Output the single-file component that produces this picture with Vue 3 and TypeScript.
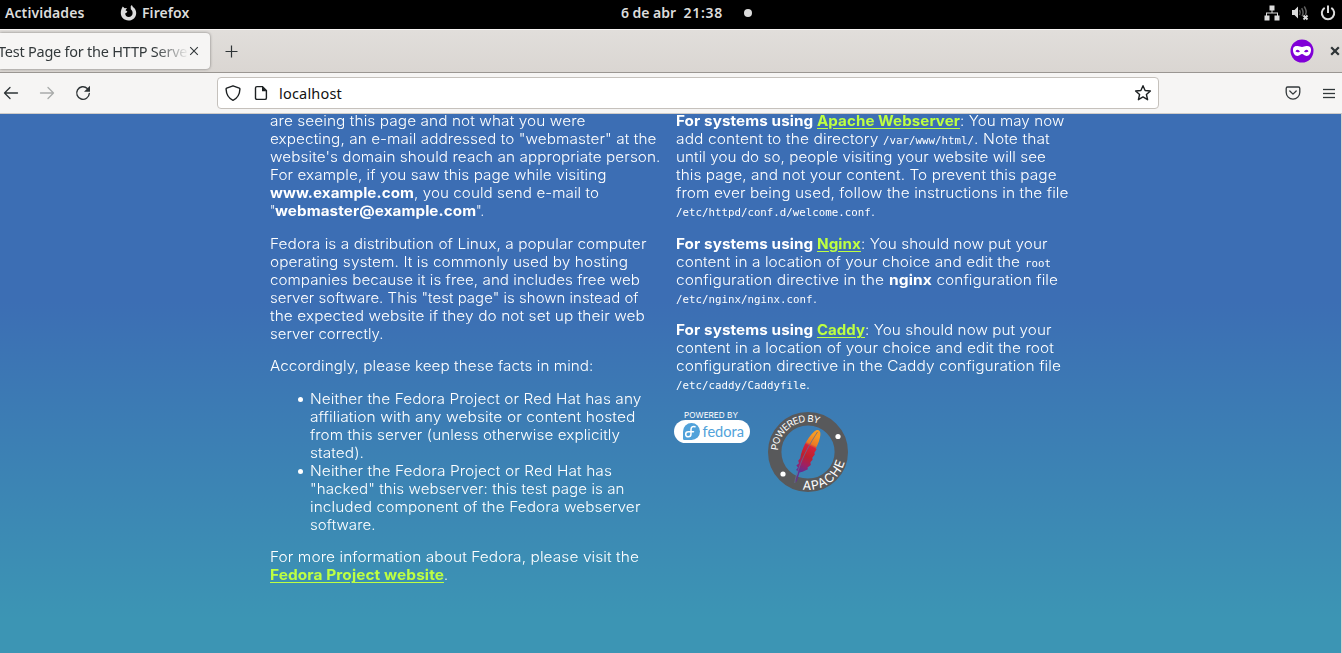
<script setup lang="ts">
type Kind = 'text' | 'bold' | 'link' | 'code'
interface Segment { t: string; w: number; k: Kind }
type Line = Segment[]

const s = (t: string, w: number, k: Kind = 'text'): Segment => ({ t, w, k })

// Makes a run of text fill the given advance width. `share` is the part of the
// correction taken by widening the glyphs; letter spacing takes the rest.
const fitText = (el: HTMLElement, width: number, share: number) => {
  const range = document.createRange()
  range.selectNodeContents(el)
  const natural = range.getBoundingClientRect().width
  const count = (el.textContent ?? '').length
  if (count === 0 || natural === 0) return
  const scale = 1 + (width / natural - 1) * share
  el.style.letterSpacing = `${(width / scale - natural) / count}px`
  if (share > 0) {
    el.style.width = `${width}px`
    el.style.transform = `scaleX(${scale})`
  }
}
const vFit = {
  mounted: (el: HTMLElement, binding: { value: number; modifiers: Record<string, boolean> }) =>
    fitText(el, binding.value, binding.modifiers.wide ? 0.85 : 0),
}

const intro: Line[][] = [
  [
    [s('are seeing this page and not what you were', 315.5)],
    [s('expecting, an e-mail addressed to "webmaster" at the', 386.5)],
    [s("website's domain should reach an appropriate person.", 390.5)],
    [s('For example, if you saw this page while visiting', 336.5)],
    [s('www.example.com', 144, 'bold'), s(', you could send e-mail to', 185)],
    [s('"', 5.3), s('webmaster@example.com', 201.2, 'bold'), s('".', 8)],
  ],
  [
    [s('Fedora is a distribution of Linux, a popular computer', 376.5)],
    [s('operating system. It is commonly used by hosting', 358)],
    [s('companies because it is free, and includes free web', 370)],
    [s('server software. This "test page" is shown instead of', 368.5)],
    [s('the expected website if they do not set up their web', 375)],
    [s('server correctly.', 113.5)],
  ],
  [[s('Accordingly, please keep these facts in mind:', 323.5)]],
]

const facts: Line[][] = [
  [
    [s('Neither the Fedora Project or Red Hat has any', 331.5)],
    [s('affiliation with any website or content hosted', 325.5)],
    [s('from this server (unless otherwise explicitly', 310)],
    [s('stated).', 54)],
  ],
  [
    [s('Neither the Fedora Project or Red Hat has', 302)],
    [s('"hacked" this webserver: this test page is an', 314.5)],
    [s('included component of the Fedora webserver', 330.5)],
    [s('software.', 65.5)],
  ],
]

const more: Line[] = [
  [s('For more information about Fedora, please visit the', 369)],
  [s('Fedora Project website', 174, 'link'), s('.', 4)],
]

const systems: Line[][] = [
  [
    [s('For systems using ', 141, 'bold'), s('Apache Webserver', 143, 'link'), s(': You may now', 104.3)],
    [s('add content to the directory ', 207), s('/var/www/html/', 91, 'code'), s('. Note that', 75.8)],
    [s('until you do so, people visiting your website will see', 370)],
    [s('this page, and not your content. To prevent this page', 380.7)],
    [s('from ever being used, follow the instructions in the file', 392.5)],
    [s('/etc/httpd/conf.d/welcome.conf', 194.7, 'code'), s('.', 4)],
  ],
  [
    [s('For systems using ', 141, 'bold'), s('Nginx', 44, 'link'), s(': You should now put your', 186.5)],
    [s('content in a location of your choice and edit the ', 348.5), s('root', 26, 'code')],
    [s('configuration directive in the ', 212.5), s('nginx', 43, 'bold'), s(' configuration file', 126)],
    [s('/etc/nginx/nginx.conf', 136.5, 'code'), s('.', 4)],
  ],
  [
    [s('For systems using ', 141, 'bold'), s('Caddy', 48, 'link'), s(': You should now put your', 186.5)],
    [s('content in a location of your choice and edit the root', 378)],
    [s('configuration directive in the Caddy configuration file', 385)],
    [s('/etc/caddy/Caddyfile', 130, 'code'), s('.', 4)],
  ],
]
</script>

<template>
  <div class="screen">
    <header class="panel">
      <div class="panel-left">
        <span v-fit="79.5" class="activities">Actividades</span>
        <svg class="fox" width="17" height="17" viewBox="0 0 17 17">
          <path fill="#dcdcdc" d="M2.8 1.6 4.6 3.2 7 3.1 5.5 5.2 7.4 6.5 6.2 8 5.2 8.3C5.1 10.6 6.6 12 8.7 12c2.4 0 4-1.8 3.9-4C12.6 6.3 11.8 5 10.8 4.2L10.7 1.3 11.9.1l1 1.8c2 1.2 3.3 3.5 3.3 6 0 4.3-3.3 7.6-7.7 7.6C4 15.5.8 12.3.8 8.1.8 5.6 1.6 3.4 2.8 1.6Z" />
        </svg>
        <span v-fit="47.5" class="app">Firefox</span>
      </div>
      <div class="clock">
        <span v-fit="55">6 de abr</span><span v-fit="39.5" class="time">21:38</span><i class="dot" />
      </div>
      <div class="tray">
        <svg width="16" height="16" viewBox="0 0 16 16" fill="#dcdcdc">
          <path d="M5.5.5h5v5h-2v2H14v3h1.5v5h-5v-5H13V8.6H3v1.9h2.5v5h-5v-5H2v-3h5.5v-2h-2z" />
        </svg>
        <svg width="18" height="16" viewBox="0 0 18 16">
          <path fill="#dcdcdc" d="M1 5h2.5L7 1.5v12L3.5 10H1z" />
          <path d="M8.5 5q1.500 2.500 0 5M10.700 3.200q2.600 4.300.4 8M13.200 1.500q3.200 4.500 1.200 8.300" fill="none" stroke="#606060" stroke-width="1.5" />
          <path d="m12.500 10.500 4 4m0-4-4 4" stroke="#dcdcdc" stroke-width="1.9" />
        </svg>
        <svg width="16" height="16" viewBox="0 0 16 16" fill="none" stroke="#dcdcdc" stroke-width="2">
          <path d="M4.700 2.800a6.200 6.200 0 1 0 6.600 0M8 .5V8" />
        </svg>
      </div>
    </header>

    <div class="tabs">
      <div class="tab">
        <span class="tab-title"><span v-fit="195">Test Page for the HTTP Server</span></span>
        <svg class="tab-close" width="10" height="10" viewBox="0 0 10 10"><path d="m1.200 1.200 7.600 7.600m0-7.600L1.200 8.800" stroke="#33393b" stroke-width="1.1" /></svg>
      </div>
      <svg class="plus" width="13" height="13" viewBox="0 0 13 13"><path d="M6.500.5v12M.5 6.500h12" stroke="#2e3436" stroke-width="1.2" /></svg>
      <div class="tabs-right">
        <svg width="24" height="24" viewBox="0 0 24 24">
          <circle cx="12" cy="12" r="11.5" fill="#8000d7" />
          <path fill="#fff" fill-rule="evenodd" d="M3 10.500C3.200 7.600 5.200 7 7.500 7c2 0 3 .9 4.500.9S14.500 7 16.500 7c2.300 0 4.300.6 4.500 3.500.1 3.300-1.600 6.500-4.500 6.500-2.300 0-2.900-1.900-4.500-1.900S9.800 17 7.500 17C4.600 17 2.900 13.800 3 10.500ZM5.400 12.300q2.300 2 4.600.1-2.300-3.100-4.600-.1Zm8.600.1q2.300 1.900 4.600-.1-2.300-3-4.600.1Z" />
        </svg>
        <svg class="win-close" width="10" height="10" viewBox="0 0 10 10"><path d="m1.200 1.200 7.600 7.600m0-7.600-7.600 7.600" stroke="#2e3436" stroke-width="2.2" /></svg>
      </div>
    </div>

    <nav class="toolbar">
      <svg class="back" width="16" height="16" viewBox="0 0 16 16" fill="none" stroke="#2e3436" stroke-width="1.3" stroke-linecap="round" stroke-linejoin="round"><path d="M14.500 8h-13M7 2.500 1.500 8 7 13.500" /></svg>
      <svg class="fwd" width="16" height="16" viewBox="0 0 16 16" fill="none" stroke="#a9abaa" stroke-width="1.3" stroke-linecap="round" stroke-linejoin="round"><path d="M1.500 8h13M9 2.500 14.500 8 9 13.500" /></svg>
      <svg class="reload" width="16" height="16" viewBox="0 0 16 16"><path d="M12.300 3.400A6.300 6.300 0 1 0 14.300 8.500" fill="none" stroke="#2e3436" stroke-width="1.4" stroke-linecap="round" /><path d="M15 .8v5.900H9z" fill="#2e3436" /></svg>
      <div class="urlbar">
        <svg class="shield" width="16" height="16" viewBox="0 0 16 16" fill="none" stroke="#1c2022" stroke-width="1.4" stroke-linejoin="round"><path d="M8 .8 14.300 3.200q.7.300.6 1.100C14.700 9.300 13 13 8 15.300 3 13 1.300 9.300 1.100 4.300 1 3.500 1.700 3.200 1.700 3.200Z" /></svg>
        <svg class="page-icon" width="14" height="16" viewBox="0 0 14 16"><path d="M3 1.600h5.500l3.900 4v7.300q0 1.500-1.500 1.500H3q-1.500 0-1.500-1.500V3.100Q1.500 1.600 3 1.600Z" fill="none" stroke="#1c2022" stroke-width="1.4" /><path d="M8 1.200v5h4.700z" fill="#1c2022" /></svg>
        <span v-fit="63" class="url">localhost</span>
        <svg class="star" width="18" height="18" viewBox="0 0 18 18" fill="none" stroke="#1c2022" stroke-width="1.4" stroke-linejoin="round"><path d="m9 1.700 2.100 4.800 5.300.5-4 3.500 1.200 5.200L9 12.900l-4.600 2.800 1.200-5.200-4-3.500 5.300-.5z" /></svg>
      </div>
      <div class="tools">
        <svg width="16" height="16" viewBox="0 0 16 16" fill="none" stroke="#33393b" stroke-width="1.3" stroke-linecap="round" stroke-linejoin="round"><path d="M2.600 2h10.800q1.400 0 1.400 1.400V7.300a6.800 6.800 0 0 1-13.600 0V3.400Q1.200 2 2.600 2ZM4.800 6 8 9.100 11.200 6" /></svg>
        <svg width="12" height="11" viewBox="0 0 12 11" fill="#33393b"><path d="M0 1h12v1H0zM0 5h12v1H0zM0 9h12v1H0z" stroke="#33393b" stroke-width=".3" /></svg>
      </div>
    </nav>

    <main class="page">
      <div class="columns">
        <section class="col left">
          <p v-for="(p, i) in intro" :key="i">
            <span v-for="(line, j) in p" :key="j" class="line"><span v-for="(seg, n) in line" :key="n" v-fit.wide="seg.w" :class="seg.k">{{ seg.t }}</span></span>
          </p>
          <ul>
            <li v-for="(f, i) in facts" :key="i">
              <span v-for="(line, j) in f" :key="j" class="line"><span v-for="(seg, n) in line" :key="n" v-fit.wide="seg.w" :class="seg.k">{{ seg.t }}</span></span>
            </li>
          </ul>
          <p>
            <span v-for="(line, j) in more" :key="j" class="line"><span v-for="(seg, n) in line" :key="n" v-fit.wide="seg.w" :class="seg.k">{{ seg.t }}</span></span>
          </p>
        </section>
        <section class="col right">
          <p v-for="(p, i) in systems" :key="i">
            <span v-for="(line, j) in p" :key="j" class="line"><span v-for="(seg, n) in line" :key="n" v-fit.wide="seg.w" :class="seg.k">{{ seg.t }}</span></span>
          </p>
          <div class="badges">
            <svg width="76" height="34" viewBox="0 0 76 34">
              <text class="badge-cap" x="10" y="8" textLength="54" lengthAdjust="spacingAndGlyphs">POWERED BY</text>
              <rect x="0" y="10" width="76" height="23" rx="11.5" fill="#fff" />
              <path d="M9 21.500a8.500 8.500 0 1 1 8.500 8.500H10.300Q9 30 9 28.700Z" fill="#51a2da" />
              <path d="M21 16.800c-2.300-.9-4 .4-4 2.700v4.500c0 1.700-1.200 2.800-2.700 2.800s-2.600-1.200-2.600-2.600 1.200-2.500 2.600-2.500h5.200" fill="none" stroke="#fff" stroke-width="1.5" stroke-linecap="round" />
              <text class="badge-name" x="28.5" y="26.7" textLength="41.5" lengthAdjust="spacingAndGlyphs">fedora</text>
            </svg>
            <svg class="apache" width="80" height="80" viewBox="0 0 80 80">
              <defs>
                <linearGradient id="feather" x1="52" y1="18" x2="33" y2="59" gradientUnits="userSpaceOnUse">
                  <stop offset="0" stop-color="#f69923" /><stop offset=".15" stop-color="#f79a23" /><stop offset=".36" stop-color="#e97826" />
                  <stop offset=".42" stop-color="#d2233c" /><stop offset=".65" stop-color="#be202e" /><stop offset=".85" stop-color="#9e2064" /><stop offset="1" stop-color="#662d91" />
                </linearGradient>
                <path id="arcTop" d="M10.030 38.500A30 30 0 0 1 70 40" />
                <path id="arcBottom" d="M34.500 77.600A38 38 0 0 0 77.500 34" />
              </defs>
              <circle cx="40" cy="40" r="33.3" fill="none" stroke="#58595b" stroke-width="13.4" />
              <circle cx="70" cy="24.500" r="2.6" fill="#fff" /><circle cx="15" cy="62" r="2.6" fill="#fff" />
              <text class="ring top"><textPath href="#arcTop" textLength="57">POWERED BY</textPath></text>
              <text class="ring bottom"><textPath href="#arcBottom" textLength="55">APACHE</textPath></text>
              <path d="M46 19.800C49.500 16.500 53 18.300 52.400 23 51.900 27 50.400 31.500 47.800 36.500l.8.7-2.200 3.500.4 1.900-2.500 3.200.3 2-2.200 2.400.4 2.700-3.300 2.700.4 1.700-5.300 2.500-3.100.6-2.700 8.700L27.500 71c0-2.500 1.600-7.500 2.800-11.500L28 58l2-2.400-1.700-2.200 2.700-2.200-.8-2.400 2-2.600C34 36.500 38.700 27 46 19.800Z" fill="url(#feather)" />
              <path d="M49.500 20C42.500 30.500 35 44 31 56c-2 5.500-3.700 9.500-4.300 15" fill="none" stroke="#656a91" stroke-width=".8" />
            </svg>
          </div>
        </section>
      </div>
    </main>
  </div>
</template>

<style>
html, body { margin: 0; overflow: hidden; }
</style>

<style scoped>
.screen { width: 1342px; height: 653px; overflow: hidden; display: flex; flex-direction: column; font-family: "Noto Sans", "Open Sans", sans-serif; white-space: pre; }
svg { display: block; flex: none; }

.panel { height: 29px; flex: none; box-sizing: border-box; padding-bottom: 3px; background: #000; color: #dcdcdc; display: flex; align-items: center; justify-content: space-between; font-size: 14px; font-weight: 600; line-height: 26px; }
.panel-left { display: flex; align-items: center; width: 500px; padding-left: 5px; }
.activities { width: 114.500px; }
.fox { margin-right: 5.500px; }
.clock { display: flex; align-items: center; width: 131px; margin-left: 98px; }
.time { margin-left: 7.500px; }
.dot { width: 8px; height: 8px; border-radius: 50%; background: #dcdcdc; margin-left: 21px; }
.tray { display: flex; align-items: center; gap: 11px; width: 572px; box-sizing: border-box; padding-right: 6px; justify-content: flex-end; }

.tabs { height: 44px; flex: none; box-sizing: border-box; border-top: 1px solid #f7f5f4; border-bottom: 1px solid #9a9692; background: linear-gradient(#e1dedb, #dad6d2); display: flex; align-items: center; }
.tab { width: 210px; height: 36px; background: #f6f5f4; border-radius: 0 4px 4px 0; box-shadow: 0 0 3px rgba(0, 0, 0, .45); display: flex; align-items: center; }
.tab-title { width: 187px; overflow: hidden; font-size: 14.5px; line-height: 36px; color: #33393b; mask-image: linear-gradient(90deg, #000 155px, transparent 189px); }
.tab-title span { display: inline-block; margin-left: -2px; }
.tab-close { margin-left: 2px; }
.plus { margin-left: 15px; }
.tabs-right { margin-left: auto; display: flex; align-items: center; gap: 16px; padding-right: 2px; }

.toolbar { height: 41px; flex: none; box-sizing: border-box; border-bottom: 1px solid #cfccc9; background: #f6f5f4; display: flex; align-items: center; }
.back { margin-left: 3px; }
.fwd { margin-left: 20px; }
.reload { margin-left: 20px; }
.urlbar { width: 942px; height: 32px; box-sizing: border-box; margin-left: 126px; border: 1px solid #c5c1bc; border-radius: 4px; background: #fff; display: flex; align-items: center; }
.shield { margin-left: 7px; }
.page-icon { margin-left: 13px; }
.url { margin-left: 11px; font-size: 14.5px; line-height: 30px; color: #111; }
.star { margin-left: auto; margin-right: 6px; }
.tools { margin-left: auto; display: flex; align-items: center; gap: 22px; padding-right: 7px; }

.page { flex: 1; overflow: hidden; border-right: 1px solid #d5d2cf; background: linear-gradient(#3c6eb4 0, #3c6eb4 188px, #3c95b4 505px, #3c95b4 100%); color: #fff; font-family: Inter, "Open Sans", sans-serif; font-size: 14.5px; font-weight: 300; line-height: 18px; }
.columns { width: 800px; margin: -2px auto 0; display: grid; grid-template-columns: 406px 394px; position: relative; left: -.5px; }
p, ul { margin: 0 0 14.6px; display: flex; flex-direction: column; }
ul { padding-left: 40px; list-style: none; }
li { display: block; position: relative; }
li::before { content: ""; position: absolute; left: -12.5px; top: 7.5px; width: 5px; height: 5px; border-radius: 50%; background: #fff; }
.line { display: flex; align-items: baseline; height: 18px; }
.line > span { flex: none; transform-origin: 0 50%; }
.bold, .link { font-weight: 700; }
.link { color: #beff42; text-decoration: underline; text-decoration-thickness: 1px; text-underline-offset: 2px; }
.code { font-family: "DejaVu Sans Mono", monospace; font-size: 10.8px; font-weight: 400; }

.badges { display: flex; align-items: flex-start; gap: 18px; padding-top: 2.2px; margin-left: -2px; }
.apache { margin-top: 2px; }
.badge-cap { font: 400 8px Inter, sans-serif; fill: #fff; }
.badge-name { font: 400 14.5px Lato, sans-serif; fill: #51a2da; }
.ring { fill: #fff; font-family: Inter, sans-serif; font-weight: 400; }
.top { font-size: 9.5px; }
.bottom { font-size: 12.5px; }
</style>
